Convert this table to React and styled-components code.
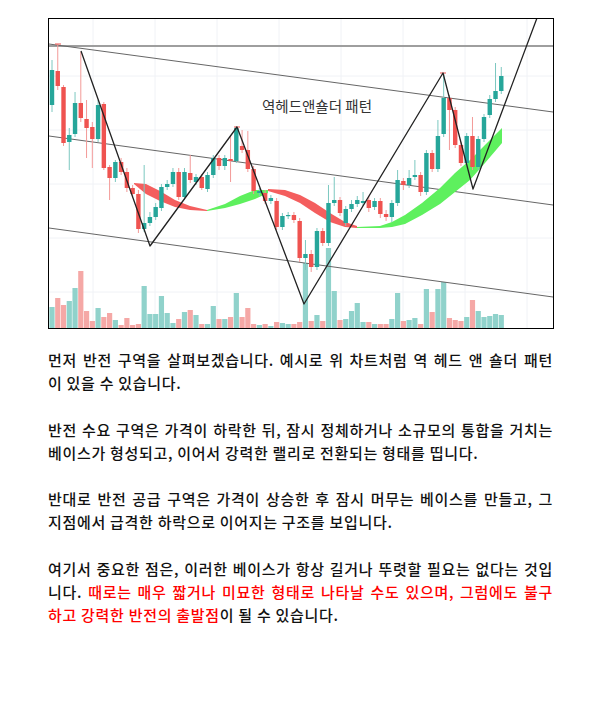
import React from "react";
import styled, { createGlobalStyle } from "styled-components";

const GlobalStyle = createGlobalStyle`
  body {
    margin: 0;
    background: #fff;
  }
`;

const Page = styled.div`
  width: 602px;
  box-sizing: border-box;
  padding: 18px 48px 40px;
  font-family: "Noto Sans CJK KR", "Noto Sans", sans-serif;
`;

const ChartFrame = styled.div`
  width: 506px;
  height: 311px;
  box-sizing: border-box;
  border: 1px solid #000;
  background: #fff;
`;

const ChartSvg = styled.svg`
  display: block;
`;

const Article = styled.div`
  margin-top: 19px;
  width: 505px;
`;

const Paragraph = styled.p`
  margin: 0 0 23px;
  font-size: 15px;
  font-weight: 500;
  line-height: 23.3px;
  letter-spacing: 0.7px;
  color: #111;
`;

// the source editor breaks lines between syllables, so each line is kept as set
const Line = styled.span`
  display: block;
  text-align: justify;
  text-align-last: ${({ $last }) => ($last ? "left" : "justify")};
  white-space: nowrap;
`;

const Highlight = styled.span`
  color: #f00;
`;

const TEAL = "#26a69a";
const RED = "#ef5350";
const X0 = 52;
const STEP = 5.76;

// open, close, high, low (in chart pixels)
const CANDLES = [
  [105, 70, 60, 112], [71, 86, 44, 90], [87, 143, 85, 146], [142, 135, 128, 170],
  [134, 103, 92, 137], [103, 118, 52, 122], [119, 128, 100, 158], [127, 139, 122, 168],
  [139, 105, 100, 142], [104, 168, 102, 170], [167, 178, 165, 200], [178, 162, 160, 182],
  [162, 172, 158, 175], [172, 188, 168, 192], [188, 194, 185, 197], [194, 229, 190, 233],
  [229, 223, 165, 232], [223, 217, 212, 226], [217, 207, 203, 220], [208, 187, 184, 211],
  [187, 184, 180, 190], [184, 172, 168, 187], [172, 197, 168, 200], [197, 172, 168, 200],
  [173, 180, 155, 183], [182, 177, 174, 185], [177, 188, 174, 190], [189, 175, 172, 192],
  [175, 158, 155, 178], [158, 166, 155, 170], [166, 158, 155, 170], [159, 161, 135, 182],
  [161, 128, 126, 163], [146, 150, 130, 153], [150, 169, 131, 172], [169, 191, 166, 194],
  [193, 191, 188, 196], [193, 201, 190, 204], [201, 198, 195, 204], [201, 227, 198, 230],
  [227, 216, 213, 230], [216, 215, 212, 219], [215, 220, 212, 223], [221, 258, 218, 262],
  [258, 254, 240, 270], [254, 267, 250, 272], [267, 231, 228, 270], [231, 243, 228, 246],
  [243, 203, 185, 246], [203, 200, 177, 206], [200, 213, 197, 216], [223, 209, 206, 226],
  [209, 204, 200, 212], [204, 200, 196, 207], [203, 201, 192, 206], [200, 208, 196, 212],
  [207, 201, 198, 210], [201, 214, 198, 218], [214, 217, 210, 221], [217, 203, 200, 222],
  [203, 180, 170, 206], [181, 185, 178, 190], [185, 178, 170, 188], [177, 175, 160, 180],
  [175, 192, 172, 196], [192, 153, 150, 195], [153, 169, 150, 172], [169, 136, 120, 172],
  [134, 98, 73, 137], [98, 110, 95, 150], [110, 145, 107, 148], [145, 163, 142, 166],
  [163, 136, 133, 166], [136, 167, 117, 170], [167, 139, 136, 170], [139, 117, 114, 142],
  [115, 99, 95, 118], [99, 91, 63, 102], [91, 76, 67, 94],
];

// top of each volume bar
const VOLUME = [
  307, 298, 305, 301, 288, 271, 311, 321, 308, 317, 313, 320, 325, 318, 325, 324,
  286, 314, 314, 296, 313, 323, 319, 312, 310, 315, 324, 324, 306, 319, 319, 317,
  293, 317, 308, 324, 325, 324, 326, 322, 323, 324, 324, 322, 263, 321, 315, 321,
  248, 291, 320, 319, 311, 303, 322, 322, 324, 324, 324, 319, 293, 321, 320, 318,
  324, 289, 312, 289, 282, 318, 320, 321, 317, 300, 311, 317, 316, 314, 315,
];

// moving average cloud: [x, top, bottom]
const RIBBON = [
  { color: "#f45e5e", pts: [[134, 183, 184], [146, 184, 194], [160, 191, 201], [175, 200, 207], [190, 206, 210], [207, 210, 211]] },
  { color: "#5ef05e", pts: [[207, 210, 211], [225, 204, 208], [240, 196, 204], [255, 190, 199], [268, 190, 193]] },
  { color: "#f45e5e", pts: [[268, 189, 191], [285, 190, 196], [300, 195, 203], [315, 203, 213], [330, 213, 222], [345, 222, 227], [357, 226, 228]] },
  {
    color: "#5ef05e",
    pts: [[357, 227, 228], [380, 226, 228], [392, 222, 227], [405, 215, 224], [422, 203, 215], [440, 188, 204], [455, 173, 192], [470, 160, 180], [485, 145, 163], [502, 128, 143]],
  },
];

const ribbonPoints = (pts) =>
  [...pts.map(([x, t]) => `${x},${t}`), ...[...pts].reverse().map(([x, , b]) => `${x},${b}`)].join(" ");

const GRID_X = [93, 155, 217, 279, 341, 403, 465, 527];
const GRID_Y = [76, 130, 184, 238, 292];

const Chart = () => (
  <ChartFrame>
    <ChartSvg width="504" height="309" viewBox="49 19 504 309">
      <rect x="49" y="19" width="504" height="309" fill="#fff" />
      {GRID_X.map((x) => (
        <line key={"gx" + x} x1={x} x2={x} y1="19" y2="328" stroke="#f0f2f6" />
      ))}
      {GRID_Y.map((y) => (
        <line key={"gy" + y} x1="49" x2="553" y1={y} y2={y} stroke="#f0f2f6" />
      ))}

      {VOLUME.map((v, i) => {
        const [o, c] = CANDLES[i];
        const x = X0 + i * STEP;
        return (
          <rect key={"v" + i} x={x - 2.6} y={v} width="5.2" height={328 - v} fill={c < o ? "#90d2cb" : "#f5a8a6"} />
        );
      })}

      <line x1="49" y1="46" x2="553" y2="46" stroke="#9e9e9e" strokeWidth="2" />
      <line x1="49" y1="44" x2="553" y2="112" stroke="#666" strokeWidth="1" />
      <line x1="49" y1="136" x2="553" y2="205" stroke="#666" strokeWidth="1" />
      <line x1="49" y1="228" x2="553" y2="297" stroke="#666" strokeWidth="1" />

      {RIBBON.map((seg, i) => (
        <polygon key={"r" + i} points={ribbonPoints(seg.pts)} fill={seg.color} />
      ))}

      {CANDLES.map(([o, c, h, l], i) => {
        const x = X0 + i * STEP;
        const up = c < o;
        const top = Math.min(o, c);
        const bot = Math.max(o, c);
        return (
          <g key={"c" + i}>
            <line x1={x} x2={x} y1={h} y2={l} stroke={up ? "#7cc8c0" : "#f39a98"} strokeWidth="1" />
            <rect x={x - 2.2} y={top} width="4.4" height={Math.max(bot - top, 1.2)} fill={up ? TEAL : RED} />
          </g>
        );
      })}

      <line x1="55" x2="61" y1="44" y2="44" stroke={RED} strokeWidth="1" />
      <line x1="234" x2="240" y1="127" y2="127" stroke={RED} strokeWidth="1" />
      <line x1="440" x2="446" y1="73" y2="73" stroke={RED} strokeWidth="1" />

      <path
        d="M81 51 L150 246 L237 127 L304 304 L443 73 L473 189 Q498 122 537 18"
        fill="none"
        stroke="#222"
        strokeWidth="1.3"
        strokeLinejoin="round"
      />

      <text x="262" y="112" fontSize="14.5" fill="#333" fontFamily='"Noto Sans CJK KR", sans-serif'>
        역헤드앤숄더 패턴
      </text>
    </ChartSvg>
  </ChartFrame>
);

export default function App() {
  return (
    <Page>
      <GlobalStyle />
      <Chart />
      <Article>
        <Paragraph>
          <Line>먼저 반전 구역을 살펴보겠습니다. 예시로 위 차트처럼 역 헤드 앤 숄더 패턴</Line>
          <Line $last>이 있을 수 있습니다.</Line>
        </Paragraph>
        <Paragraph>
          <Line>반전 수요 구역은 가격이 하락한 뒤, 잠시 정체하거나 소규모의 통합을 거치는</Line>
          <Line $last>베이스가 형성되고, 이어서 강력한 랠리로 전환되는 형태를 띱니다.</Line>
        </Paragraph>
        <Paragraph>
          <Line>반대로 반전 공급 구역은 가격이 상승한 후 잠시 머무는 베이스를 만들고, 그</Line>
          <Line $last>지점에서 급격한 하락으로 이어지는 구조를 보입니다.</Line>
        </Paragraph>
        <Paragraph>
          <Line>여기서 중요한 점은, 이러한 베이스가 항상 길거나 뚜렷할 필요는 없다는 것입</Line>
          <Line>
            니다. <Highlight>때로는 매우 짧거나 미묘한 형태로 나타날 수도 있으며, 그럼에도 불구</Highlight>
          </Line>
          <Line $last>
            <Highlight>하고 강력한 반전의 출발점</Highlight>이 될 수 있습니다.
          </Line>
        </Paragraph>
      </Article>
    </Page>
  );
}
